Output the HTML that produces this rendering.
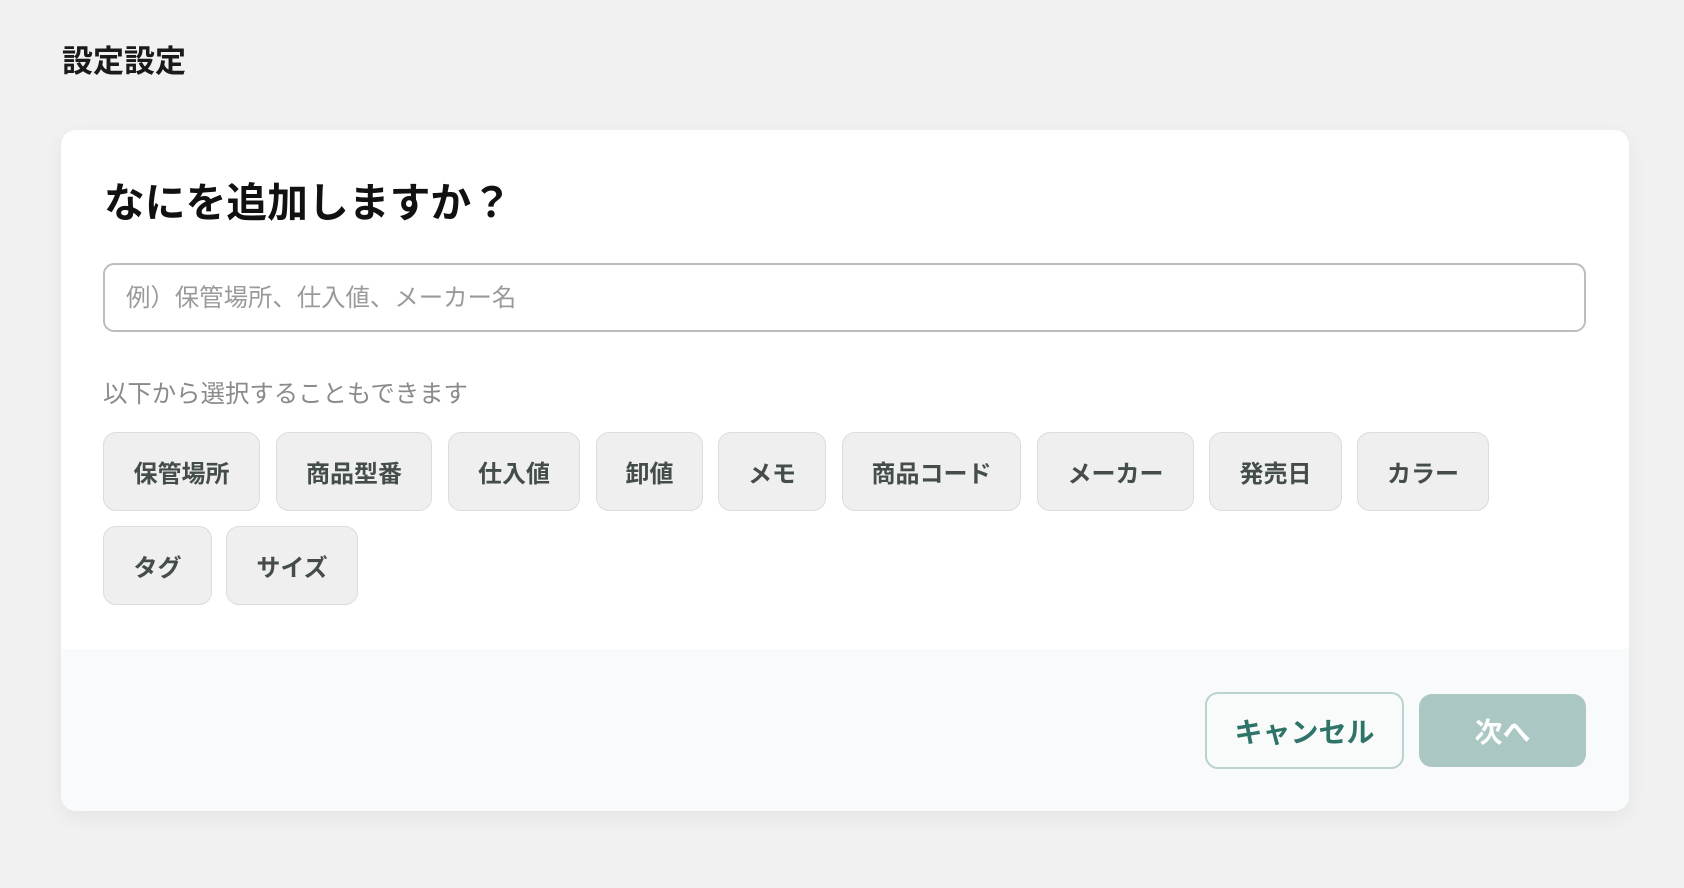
<!DOCTYPE html>
<html><head><meta charset="utf-8"><style>
*{box-sizing:border-box;margin:0;padding:0}
body{width:1684px;height:888px;background:#f1f1f1;font-family:"Liberation Sans","Noto Sans CJK JP",sans-serif;position:relative;overflow:hidden}
.t{position:absolute;left:62px;top:43px;font-size:31px;font-weight:700;color:#1a1a1a;line-height:38px}
.card{position:absolute;left:61px;top:130px;width:1568px;height:681px;background:#fff;border-radius:15px;box-shadow:0 6px 20px rgba(0,0,0,.06);overflow:hidden}
h1{position:absolute;left:43px;top:48px;font-size:40.8px;font-weight:700;color:#111;line-height:50px}
.inp{position:absolute;left:42px;top:133px;width:1483px;height:69px;border:2px solid #bdbdbd;border-radius:11px;font-size:24.4px;color:#9a9a9a;padding-left:21px;line-height:67px}
.sub{position:absolute;left:42px;top:250px;font-size:24.4px;color:#8a8a8a;line-height:30px}
.c{position:absolute;height:79px;background:#efefef;border:1.5px solid #dcdcdc;border-radius:13px;font-size:24px;font-weight:700;color:#454d4b;display:flex;align-items:center;justify-content:center}
.foot{position:absolute;left:0;top:519px;width:100%;height:162px;background:#f8fafb}
.b{position:absolute;border-radius:13px;font-size:28px;font-weight:700;display:flex;align-items:center;justify-content:center}
</style></head><body>
<div class="t">設定設定</div>
<div class="card">
<h1>なにを追加しますか？</h1>
<div class="inp">例）保管場所、仕入値、メーカー名</div>
<div class="sub">以下から選択することもできます</div>
<div class="c" style="left:42px;top:302px;width:157px">保管場所</div>
<div class="c" style="left:215px;top:302px;width:156px">商品型番</div>
<div class="c" style="left:387px;top:302px;width:132px">仕入値</div>
<div class="c" style="left:535px;top:302px;width:107px">卸値</div>
<div class="c" style="left:657px;top:302px;width:108px">メモ</div>
<div class="c" style="left:781px;top:302px;width:179px">商品コード</div>
<div class="c" style="left:976px;top:302px;width:157px">メーカー</div>
<div class="c" style="left:1148px;top:302px;width:133px">発売日</div>
<div class="c" style="left:1296px;top:302px;width:132px">カラー</div>
<div class="c" style="left:42px;top:396px;width:109px">タグ</div>
<div class="c" style="left:165px;top:396px;width:132px">サイズ</div>
<div class="foot">
<div class="b" style="left:1144px;top:43px;width:199px;height:77px;border:2px solid #bcd2ce;color:#2f7468;background:#f9fbfb">キャンセル</div>
<div class="b" style="left:1358px;top:45px;width:167px;height:73px;background:#abc7c3;color:#fff">次へ</div>
</div>
</div>
</body></html>
